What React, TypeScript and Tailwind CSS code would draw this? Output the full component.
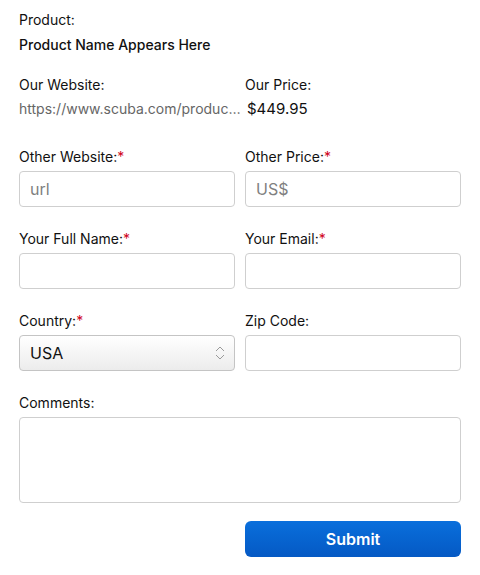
import React from "react";

function Label({ text, req }: { text: string; req?: boolean }) {
  return (
    <div className="h-5 text-[14px] leading-5 text-[#111]">
      {text}
      {req && <span className="text-[#d0021b]">*</span>}
    </div>
  );
}

function Input({ placeholder }: { placeholder?: string }) {
  return (
    <div className="mt-1 h-9 rounded-[4px] border border-[#cfcfcf] bg-white px-[10px] flex items-center text-[16px] text-[#808080]">
      {placeholder}
    </div>
  );
}

export default function App() {
  return (
    <div className="w-[480px] h-[575px] bg-white px-[19px] pt-[10px] font-['Inter','Roboto',sans-serif]">
      <div className="h-5 text-[14px] leading-5 text-[#111]">Product:</div>
      <div className="mt-[5px] h-5 text-[14px] leading-5 font-medium text-[#111]">Product Name Appears Here</div>

      <div className="mt-5 grid grid-cols-2 gap-x-[10px]">
        <div>
          <Label text="Our Website:" />
          <div className="mt-1 h-5 text-[14px] leading-5 text-[#666] whitespace-nowrap">
            https://www.scuba.com/produc…
          </div>
        </div>
        <div>
          <Label text="Our Price:" />
          <div className="mt-1 h-5 pl-[2px] text-[15px] leading-5 text-[#111]">$449.95</div>
        </div>
      </div>

      <div className="mt-7 grid grid-cols-2 gap-x-[10px] gap-y-[22px]">
        <div>
          <Label text="Other Website:" req />
          <Input placeholder="url" />
        </div>
        <div>
          <Label text="Other Price:" req />
          <Input placeholder="US$" />
        </div>
        <div>
          <Label text="Your Full Name:" req />
          <Input />
        </div>
        <div>
          <Label text="Your Email:" req />
          <Input />
        </div>
        <div>
          <Label text="Country:" req />
          <div className="mt-1 h-9 rounded-[4px] border border-[#c4c4c4] bg-gradient-to-b from-white to-[#ececec] pl-[10px] pr-[8px] flex items-center justify-between text-[16px] text-[#111]">
            <span>USA</span>
            <svg width="12" height="18" viewBox="0 0 12 18" fill="none" stroke="#9a9a9a" strokeWidth="1">
              <path d="M2 7 L6 3 L10 7" />
              <path d="M2 11 L6 15 L10 11" />
            </svg>
          </div>
        </div>
        <div>
          <Label text="Zip Code:" />
          <Input />
        </div>
        <div className="col-span-2">
          <Label text="Comments:" />
          <div className="mt-1 h-[86px] rounded-[4px] border border-[#cfcfcf] bg-white" />
        </div>
      </div>

      <div className="mt-[18px] grid grid-cols-2 gap-x-[10px]">
        <div />
        <button className="h-9 rounded-[6px] bg-gradient-to-b from-[#0a6fdc] to-[#0559c4] text-white text-[16px] font-semibold">
          Submit
        </button>
      </div>
    </div>
  );
}
